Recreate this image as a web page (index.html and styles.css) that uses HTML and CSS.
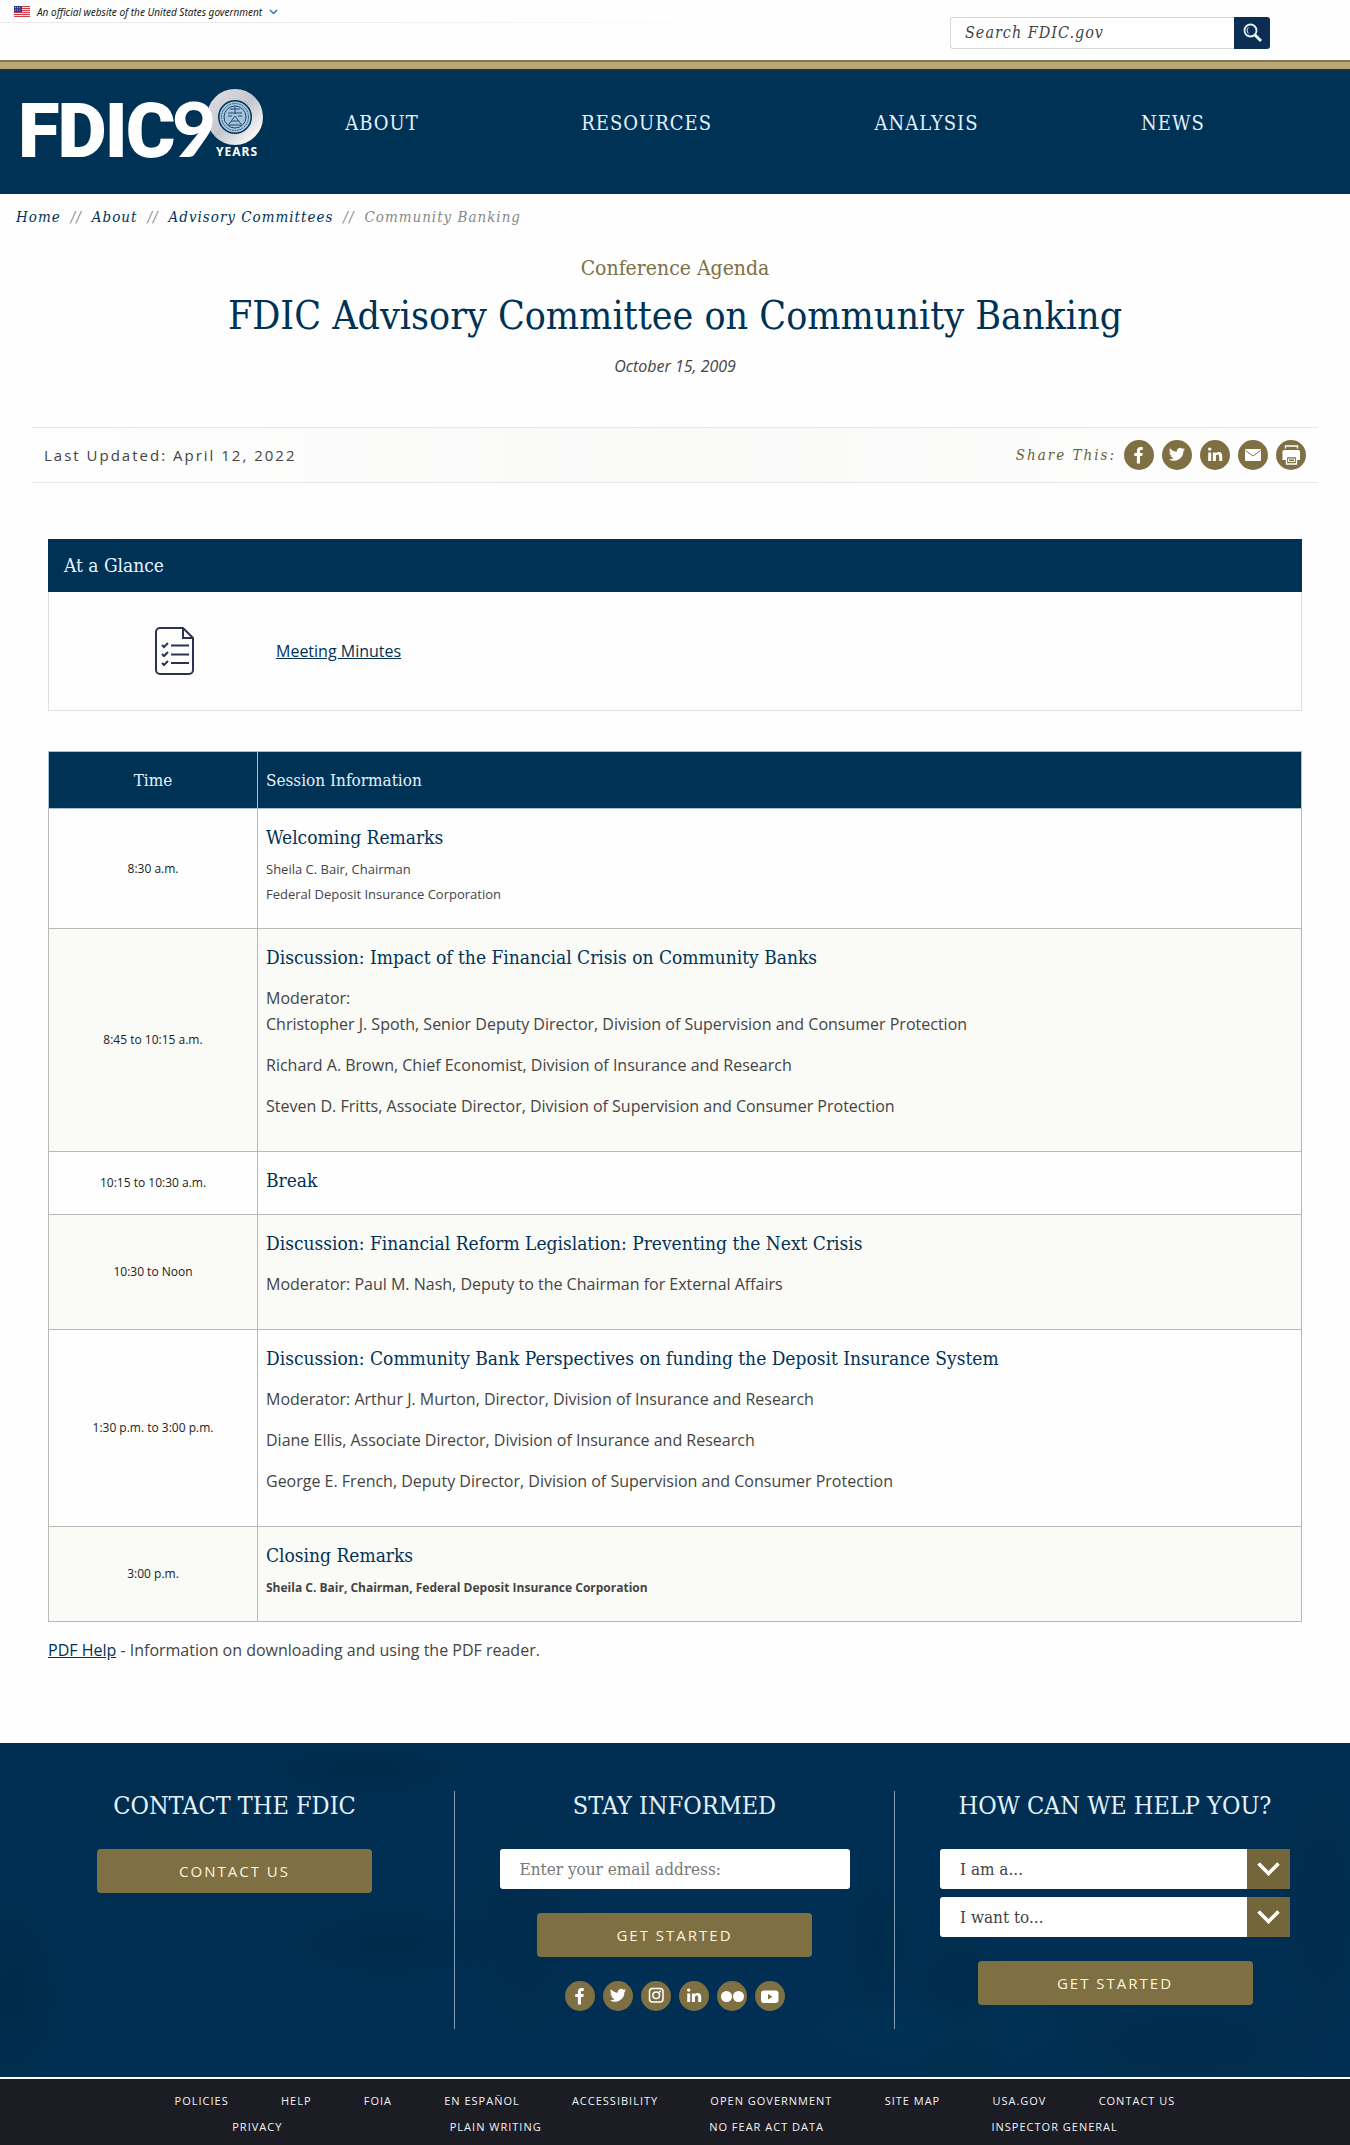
FILE: index.html
```html
<!DOCTYPE html>
<html lang="en">
<head>
<meta charset="utf-8">
<meta name="viewport" content="width=device-width, initial-scale=1">
<title>FDIC Advisory Committee on Community Banking</title>
<link rel="stylesheet" href="styles.css">
</head>
<body>
<svg class="sprite" aria-hidden="true">
  <symbol id="facebook" viewBox="0 0 30 30"><path d="M12.900 23.500v-7.500H10.300v-3h2.600v-2.200c0-2.600 1.500-3.800 3.800-3.800h2v2.900h-1.300c-1.100 0-1.400.5-1.400 1.300v1.800h2.700l-.4 3H16v7.500z"/></symbol>
  <symbol id="twitter" viewBox="0 0 30 30"><path d="M23 9.300c-.6.300-1.200.5-1.900.5.7-.4 1.200-1 1.400-1.800-.6.400-1.300.6-2.100.8a3.300 3.300 0 0 0-5.600 3A9.300 9.300 0 0 1 8 8.300a3.300 3.300 0 0 0 1 4.400c-.5 0-1-.2-1.500-.4 0 1.600 1.100 3 2.600 3.300-.5.100-1 .1-1.500 0 .4 1.300 1.600 2.300 3.100 2.300A6.600 6.600 0 0 1 7 19.200 9.400 9.400 0 0 0 21.400 11c.6-.5 1.200-1 1.600-1.700z"/></symbol>
  <symbol id="linkedin" viewBox="0 0 30 30"><path d="M8.200 12.400h3V21h-3zM12.900 12.400h2.900v1.200c.5-.8 1.400-1.500 2.900-1.500 2.800 0 3.500 1.800 3.500 4.200V21h-3v-4.400c0-1.100-.1-2.200-1.500-2.200s-1.800 1-1.800 2.200V21h-3z"/><circle cx="9.700" cy="9.100" r="1.700"/></symbol>
  <symbol id="mail" viewBox="0 0 30 30"><rect x="7" y="9" width="16" height="12" rx="1"/><path d="M7.500 10.500 15 16l7.500-5.500" fill="none" stroke="#7f7044" stroke-width="1"/></symbol>
  <symbol id="printer" viewBox="0 0 30 30"><g fill="none" stroke="#fff" stroke-width="1.300"><path d="M9.500 8.500V6h12v2.500"/></g><path d="M8 10h14.500A1.500 1.500 0 0 1 24 11.500V20H6.500v-8.500A1.500 1.500 0 0 1 8 10z"/><path d="M10.500 16.500h10V24h-10z" fill="#7f7044" stroke="#fff" stroke-width="1.300"/><path d="M12.500 19h6v2.500h-6z" fill="none" stroke="#fff"/></symbol>
  <symbol id="instagram" viewBox="0 0 30 30"><g fill="none" stroke="#fff" stroke-width="1.500"><rect x="8.500" y="7.500" width="13.500" height="13.500" rx="3"/><circle cx="15.200" cy="14.300" r="3.300"/></g><circle cx="19" cy="10.600" r="1"/></symbol>
  <symbol id="flickr" viewBox="0 0 30 30"><circle cx="9.500" cy="15.500" r="5.500"/><circle cx="21.500" cy="15.500" r="5.500"/></symbol>
  <symbol id="youtube" viewBox="0 0 30 30"><rect x="6" y="9.500" width="17.500" height="12.500" rx="3"/><path d="m13 13 4.500 2.800L13 18.600z" fill="#7f7044"/></symbol>
  <symbol id="chevron" viewBox="0 0 24 16"><path d="m2 2.500 10 10 10-10" fill="none" stroke="#fff" stroke-width="3.600"/></symbol>
</svg>

<div class="topbar">
  <button class="official" type="button">
    <svg width="16" height="11" viewBox="0 0 16 11" aria-hidden="true"><path fill="#f4e9ea" d="M0 0h16v11H0z"/><path stroke="#cf3b46" d="M0 .5h16M0 2.500h16M0 4.500h16M0 6.500h16M0 8.500h16M0 10.500h16"/><path fill="#343a83" d="M0 0h8v6H0z"/><path stroke="#a9add2" stroke-dasharray="1 1" d="M1 1.500h6M1 4h6"/></svg>
    <span>An official website of the United States government</span>
    <svg width="9" height="6" viewBox="0 0 9 6" aria-hidden="true"><path d="m1 1 3.500 3.500L8 1" fill="none" stroke="#2b7bbd" stroke-width="1.500"/></svg>
  </button>
  <form class="search">
    <input type="search" placeholder="Search FDIC.gov" aria-label="Search FDIC.gov">
    <button type="button" aria-label="Search"><svg width="20" height="20" viewBox="0 0 20 20"><g fill="none" stroke="#e6f1fa"><circle cx="7.500" cy="7.500" r="6" stroke-width="1.800"/><path d="m12 12 6 6" stroke-width="3"/><path d="M5.500 10.500a4 4 0 0 1 0-6" stroke-width="1"/></g></svg></button>
  </form>
</div>

<header class="masthead">
  <a class="logo" href="#" aria-label="FDIC home">
    <svg width="246" height="78" viewBox="0 0 246 78">
      <defs>
        <linearGradient id="ring" x1="0" y1="0" x2="1" y2="1"><stop offset="0" stop-color="#dcdde2"/><stop offset=".5" stop-color="#c3c6cb"/><stop offset="1" stop-color="#fff"/></linearGradient>
      </defs>
      <text class="logo-name" x="0" y="70">FDIC</text>
      <circle cx="217" cy="30" r="22.500" fill="#003256" stroke="url(#ring)" stroke-width="11"/>
      <text class="logo-nine" x="154" y="70">9</text>
      <circle cx="217" cy="30" r="15.500" fill="#a3c4de"/>
      <g fill="none" stroke="#26496b"><circle cx="217" cy="30" r="13.500" stroke-dasharray="1.500 1"/><circle cx="217" cy="30" r="11"/><path d="M210 26h14M210 29h4m6 0h4M212 22h10M217 20v7M211 37l6-8 6 8M213 34h8M210 38h14"/></g>
      <text class="logo-years" x="198" y="69">YEARS</text>
    </svg>
  </a>
  <nav class="mainnav" aria-label="Main">
    <a href="#">ABOUT</a><a href="#">RESOURCES</a><a href="#">ANALYSIS</a><a href="#">NEWS</a>
  </nav>
</header>

<nav class="crumbs" aria-label="Breadcrumb">
  <a href="#">Home</a><span>//</span><a href="#">About</a><span>//</span><a href="#">Advisory Committees</a><span>//</span><span>Community Banking</span>
</nav>

<main>
  <div class="heading">
    <p class="kicker">Conference Agenda</p>
    <h1>FDIC Advisory Committee on Community Banking</h1>
    <p class="date">October 15, 2009</p>
  </div>

  <div class="meta">
    <span class="updated">Last Updated: April 12, 2022</span>
    <div class="share">
      <span>Share This:</span>
      <a href="#" aria-label="Facebook"><svg><use href="#facebook"/></svg></a>
      <a href="#" aria-label="Twitter"><svg><use href="#twitter"/></svg></a>
      <a href="#" aria-label="LinkedIn"><svg><use href="#linkedin"/></svg></a>
      <a href="#" aria-label="Email"><svg><use href="#mail"/></svg></a>
      <a href="#" aria-label="Print"><svg><use href="#printer"/></svg></a>
    </div>
  </div>

  <div class="content">
    <section class="glance">
      <h2>At a Glance</h2>
      <div class="glance-body">
        <svg width="40" height="48" viewBox="0 0 40 48" fill="none" stroke="#2b3350" stroke-width="2" aria-hidden="true"><path d="M28 1H5a4 4 0 0 0-4 4v38a4 4 0 0 0 4 4h29a4 4 0 0 0 4-4V11z"/><path d="M28 1v10h10"/><path d="M16 18.500h18M16 27.500h18M16 36h18M7 18l2 2 4-4M7 27l2 2 4-4M7 36l2 2 4-4"/></svg>
        <a href="#">Meeting Minutes</a>
      </div>
    </section>

    <table class="agenda">
      <thead><tr><th class="time" scope="col">Time</th><th scope="col">Session Information</th></tr></thead>
      <tbody>
        <tr><td class="time">8:30 a.m.</td><td><h3>Welcoming Remarks</h3><div class="small">Sheila C. Bair, Chairman<br>Federal Deposit Insurance Corporation</div></td></tr>
        <tr><td class="time">8:45 to 10:15 a.m.</td><td><h3>Discussion: Impact of the Financial Crisis on Community Banks</h3><div class="people"><p>Moderator:<br>Christopher J. Spoth, Senior Deputy Director, Division of Supervision and Consumer Protection</p><p>Richard A. Brown, Chief Economist, Division of Insurance and Research</p><p>Steven D. Fritts, Associate Director, Division of Supervision and Consumer Protection</p></div></td></tr>
        <tr><td class="time">10:15 to 10:30 a.m.</td><td><h3>Break</h3></td></tr>
        <tr><td class="time">10:30 to Noon</td><td><h3>Discussion: Financial Reform Legislation: Preventing the Next Crisis</h3><div class="people"><p>Moderator: Paul M. Nash, Deputy to the Chairman for External Affairs</p></div></td></tr>
        <tr><td class="time">1:30 p.m. to 3:00 p.m.</td><td><h3>Discussion: Community Bank Perspectives on funding the Deposit Insurance System</h3><div class="people"><p>Moderator: Arthur J. Murton, Director, Division of Insurance and Research</p><p>Diane Ellis, Associate Director, Division of Insurance and Research</p><p>George E. French, Deputy Director, Division of Supervision and Consumer Protection</p></div></td></tr>
        <tr><td class="time">3:00 p.m.</td><td><h3>Closing Remarks</h3><div class="small strong">Sheila C. Bair, Chairman, Federal Deposit Insurance Corporation</div></td></tr>
      </tbody>
    </table>
    <p class="pdf"><a href="#">PDF Help</a> - Information on downloading and using the PDF reader.</p>
  </div>
</main>

<footer>
  <div class="panels">
    <section>
      <h2>CONTACT THE FDIC</h2>
      <button class="cta" type="button">CONTACT US</button>
    </section>
    <section>
      <h2>STAY INFORMED</h2>
      <input class="field" type="email" placeholder="Enter your email address:" aria-label="Email address">
      <button class="cta" type="button">GET STARTED</button>
      <div class="social">
        <a href="#" aria-label="Facebook"><svg><use href="#facebook"/></svg></a>
        <a href="#" aria-label="Twitter"><svg><use href="#twitter"/></svg></a>
        <a href="#" aria-label="Instagram"><svg><use href="#instagram"/></svg></a>
        <a href="#" aria-label="LinkedIn"><svg><use href="#linkedin"/></svg></a>
        <a href="#" aria-label="Flickr"><svg><use href="#flickr"/></svg></a>
        <a href="#" aria-label="YouTube"><svg><use href="#youtube"/></svg></a>
      </div>
    </section>
    <section>
      <h2>HOW CAN WE HELP YOU?</h2>
      <div class="picker"><select class="field" aria-label="I am a"><option>I am a...</option></select><svg class="arrow" aria-hidden="true"><use href="#chevron"/></svg></div>
      <div class="picker"><select class="field" aria-label="I want to"><option>I want to...</option></select><svg class="arrow" aria-hidden="true"><use href="#chevron"/></svg></div>
      <button class="cta" type="button">GET STARTED</button>
    </section>
  </div>
  <div class="legal">
    <nav aria-label="Policies"><a href="#">POLICIES</a><a href="#">HELP</a><a href="#">FOIA</a><a href="#">EN ESPAÑOL</a><a href="#">ACCESSIBILITY</a><a href="#">OPEN GOVERNMENT</a><a href="#">SITE MAP</a><a href="#">USA.GOV</a><a href="#">CONTACT US</a></nav>
    <nav aria-label="Notices"><a href="#">PRIVACY</a><a href="#">PLAIN WRITING</a><a href="#">NO FEAR ACT DATA</a><a href="#">INSPECTOR GENERAL</a></nav>
  </div>
</footer>
</body>
</html>
```
FILE: styles.css
```css
:root {
  --navy: #003256;
  --gold: #7f7044;
  --serif: "DejaVu Serif Condensed", "DejaVu Serif", serif;
  --sans: "Open Sans", "Noto Sans", sans-serif;
}
* { box-sizing: border-box; }
body { margin: 0; background: #fefefe; color: #444; font: 16px/26px var(--sans); }
h1, h2, h3, p { margin: 0; font-weight: 400; }
a { color: var(--navy); }
button, input, select { font: inherit; border: 0; margin: 0; }
.sprite { display: none; }

.topbar {
  height: 62px;
  display: flex;
  justify-content: space-between;
  align-items: flex-start;
  border-bottom: 2px solid #857650;
  background: linear-gradient(90deg, #ebebeb 20%, #fefefe 58%) 0 22px / 100% 1px no-repeat;
}
.official {
  display: flex;
  align-items: center;
  gap: 7px;
  height: 23px;
  padding: 0 14px;
  background: none;
  color: #222;
  font-family: "Noto Sans", sans-serif;
  font-size: 10px;
  font-style: italic;
}
.search { display: flex; margin: 17px 80px 0 0; height: 32px; }
.search input {
  width: 284px;
  padding: 0 14px;
  border: 1px solid #d5dcd5;
  border-right: 0;
  border-radius: 3px 0 0 3px;
  background: #fff;
  font: italic 16px/30px var(--serif);
  letter-spacing: 1px;
}
.search input::placeholder { color: #444; opacity: 1; }
.search button { width: 36px; padding: 0 0 0 1px; display: grid; place-items: center; background: #0b2f52; border-radius: 0 3px 3px 0; }

.masthead {
  display: flex;
  min-height: 132px;
  background: var(--navy);
  border-top: 7px solid #b8a978;
  box-shadow: inset 0 2px #19343f;
}
.logo { flex: none; margin: 18px 0 0 18px; }
.logo svg { display: block; }
.logo text { fill: #fff; }
.logo .logo-name { font: 900 76px Roboto, sans-serif; letter-spacing: -2px; }
.logo .logo-nine { font: 900 76px Lato, sans-serif; }
.logo .logo-years { font: 700 12px "Noto Sans", sans-serif; letter-spacing: 1px; }
.mainnav { flex: 1; display: flex; justify-content: space-around; margin: 39px 64px 0 0; }
.mainnav a { color: #e3f2fd; text-decoration: none; font: 20px/30px var(--serif); letter-spacing: 1px; }

.crumbs { display: flex; gap: 10px; padding: 11px 16px 0; color: #888; font: italic 15px/24px var(--serif); letter-spacing: 1px; }
.crumbs a { text-decoration: none; }

.heading { text-align: center; padding-top: 24px; }
.kicker { color: var(--gold); font: 21px/30px var(--serif); }
h1 { color: var(--navy); font: 39px/48px var(--serif); margin: 9px 0 13px; }
.date { font-style: italic; }

.meta {
  display: flex;
  justify-content: space-between;
  align-items: center;
  min-height: 56px;
  margin: 48px 32px 56px;
  padding: 0 12px;
  border: 1px solid #e8e8e8;
  border-width: 1px 0;
  background: linear-gradient(90deg, #fefefe, #f9f9f8 50%, #fefefe);
}
.updated { font-size: 15px; letter-spacing: 2px; }
.share { display: flex; align-items: center; gap: 8px; color: #6a5d38; }
.share span { font: italic 15px/30px var(--serif); letter-spacing: 2px; }
.share a, .social a { width: 30px; height: 30px; border-radius: 50%; background: var(--gold); }
.share svg, .social svg { display: block; width: 30px; height: 30px; fill: #fff; }

.content { padding: 0 48px; }
.glance { border: 1px solid #e0e0e0; border-top: 0; margin-bottom: 40px; }
.glance h2 { background: var(--navy); color: #e9f5ff; margin: 0 -1px; padding: 12px 16px; font: 19px/29px var(--serif); }
.glance-body { display: flex; align-items: center; min-height: 118px; padding-left: 106px; gap: 81px; }

.agenda { width: 100%; border-collapse: collapse; }
.agenda th, .agenda td { border: 1px solid #b8b8b8; padding: 16px 8px 21px; text-align: left; }
.agenda th { background: var(--navy); color: #e3f2fd; border-color: #a9c0d0; padding: 13px 8px; font: 17px/30px var(--serif); }
.agenda .time { width: 209px; text-align: center; }
.agenda td.time { padding: 0 8px; color: #222; font-size: 12px; }
.agenda tbody tr:nth-child(even) { background: #fafaf6; }
.agenda h3 { color: var(--navy); font: 19px/25px var(--serif); }
.people { padding-bottom: 11px; }
.people p { margin-top: 15px; }
.small { margin-top: 7px; font-size: 13px; line-height: 25px; }
.strong { font-size: 12px; font-weight: 700; }
.pdf { padding: 15px 0 80px; }

footer { background: #002e52; }
.panels {
  display: grid;
  grid-template-columns: repeat(3, 1fr);
  padding: 48px 15px;
  border-bottom: 2px solid #fff;
  background:
    radial-gradient(ellipse 90px 40px at 12% 20%, #00284655, transparent),
    radial-gradient(ellipse 110px 30px at 27% 8%, #00253f88, transparent),
    radial-gradient(ellipse 60px 110px at 1% 75%, #00283f88, transparent),
    radial-gradient(ellipse 120px 45px at 29% 60%, #00253f77, transparent),
    radial-gradient(ellipse 80px 130px at 39% 55%, #00294577, transparent),
    radial-gradient(ellipse 40px 90px at 65% 60%, #00253f66, transparent),
    radial-gradient(ellipse 130px 40px at 70% 85%, #003a5e66, transparent),
    radial-gradient(ellipse 60px 90px at 71% 80%, #00253f77, transparent),
    radial-gradient(ellipse 160px 60px at 88% 90%, #00284677, transparent),
    radial-gradient(ellipse 60px 160px at 98% 50%, #00284677, transparent),
    #002f53;
}
.panels section { display: flex; flex-direction: column; align-items: center; min-height: 238px; }
.panels section:not(:last-child) { border-right: 1px solid #7fa0b8; }
.panels h2 { color: #e3f2fd; font: 25px/30px var(--serif); margin-bottom: 28px; }
.cta { width: 275px; height: 44px; border-radius: 4px; background: var(--gold); color: #fff3dc; font-size: 15px; letter-spacing: 2px; }
.field { width: 350px; height: 40px; padding: 0 20px; border-radius: 3px; background: #fff; color: #444; font: 17px/40px var(--serif); }
.field::placeholder { color: #777; opacity: 1; }
.field + .cta { margin-top: 24px; }
.social { display: flex; gap: 8px; margin-top: 24px; }
.picker { position: relative; margin-bottom: 8px; }
.picker select { display: block; appearance: none; }
.arrow { position: absolute; right: 0; top: 0; width: 43px; height: 40px; padding: 12px 9px; background: #74653a; pointer-events: none; }
.picker + .cta { margin-top: 16px; }

.legal { background: #1c1c25; padding: 9px 11% 6px; }
.legal nav { display: flex; justify-content: space-around; }
.legal a { color: #f2f2f2; text-decoration: none; font-size: 11px; letter-spacing: 1px; }
```
